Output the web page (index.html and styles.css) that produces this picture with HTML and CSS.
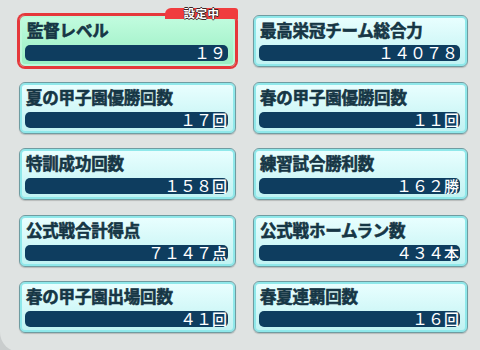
FILE: index.html
```html
<!DOCTYPE html>
<html lang="ja">
<head>
<meta charset="UTF-8" />
<title>記録</title>
<link rel="stylesheet" href="styles.css">
</head>
<body>
<div class="panel">
  <div class="grid">
    <div class="card selected">
      <div class="badge">設定中</div>
      <div class="label">監督レベル</div>
      <div class="bar">１９</div>
    </div>
    <div class="card">
      <div class="label">最高栄冠チーム総合力</div>
      <div class="bar">１４０７８</div>
    </div>
    <div class="card">
      <div class="label">夏の甲子園優勝回数</div>
      <div class="bar">１７<span class="unit">回</span></div>
    </div>
    <div class="card">
      <div class="label">春の甲子園優勝回数</div>
      <div class="bar">１１<span class="unit">回</span></div>
    </div>
    <div class="card">
      <div class="label">特訓成功回数</div>
      <div class="bar">１５８<span class="unit">回</span></div>
    </div>
    <div class="card">
      <div class="label">練習試合勝利数</div>
      <div class="bar">１６２<span class="unit">勝</span></div>
    </div>
    <div class="card">
      <div class="label">公式戦合計得点</div>
      <div class="bar">７１４７<span class="unit">点</span></div>
    </div>
    <div class="card">
      <div class="label">公式戦ホームラン数</div>
      <div class="bar">４３４<span class="unit">本</span></div>
    </div>
    <div class="card">
      <div class="label">春の甲子園出場回数</div>
      <div class="bar">４１<span class="unit">回</span></div>
    </div>
    <div class="card">
      <div class="label">春夏連覇回数</div>
      <div class="bar">１６<span class="unit">回</span></div>
    </div>
  </div>
</div>
</body>
</html>
```

FILE: styles.css
```css
html, body {
  margin: 0;
  padding: 0;
}
body {
  width: 480px;
  height: 350px;
  overflow: hidden;
  background: #c9cdcd;
  font-family: "Noto Sans CJK JP", "Noto Sans", sans-serif;
}
.panel {
  height: 352px;
  background: #dfe3e2;
  border-bottom-left-radius: 20px;
  box-sizing: border-box;
  padding: 15px 0 0 19px;
}
.grid {
  display: grid;
  grid-template-columns: 217px 215px;
  grid-auto-rows: 52px;
  column-gap: 17px;
  row-gap: 14.5px;
}
.card {
  position: relative;
  box-sizing: border-box;
  border: 1px solid #6f9ca1;
  border-radius: 6px;
  background: linear-gradient(#eaffff, #bff2f2);
  box-shadow: inset 0 0 0 2px #8fe8ea, 0 1px 1px rgba(0, 0, 0, 0.18);
}
.card.selected {
  border-color: #e5383b;
  background: linear-gradient(#c2fcdf, #98eec2);
  box-shadow: inset 0 0 0 2px #bcf9da, 0 0 0 2px #e5383b;
}
.label {
  padding: 4px 0 0 6px;
  height: 21px;
  line-height: 21px;
  font-size: 16.5px;
  font-weight: 700;
  color: #163645;
  -webkit-text-stroke: 0.6px #163645;
  letter-spacing: -0.2px;
  white-space: nowrap;
}
.selected .label {
  padding-left: 7px;
}
.bar {
  margin: 4px 7px 0 5px;
  height: 16px;
  line-height: 15px;
  background: #0e3d5f;
  border-radius: 5px;
  color: #fff;
  font-size: 16px;
  font-weight: 400;
  text-align: right;
  padding-right: 2px;
  white-space: nowrap;
}
.unit {
  font-size: 15px;
  font-weight: 500;
  margin-right: -1px;
}
.badge {
  position: absolute;
  top: -8px;
  right: -3px;
  width: 73px;
  height: 11px;
  line-height: 11px;
  background: #f03c3e;
  border-radius: 6px 3px 0 0;
  color: #fff;
  font-size: 11.5px;
  font-weight: 700;
  text-align: center;
  letter-spacing: 0.5px;
  text-shadow: 0.7px 0 0 #3a2424, -0.7px 0 0 #3a2424, 0 0.7px 0 #3a2424, 0 -0.7px 0 #3a2424;
}
```
